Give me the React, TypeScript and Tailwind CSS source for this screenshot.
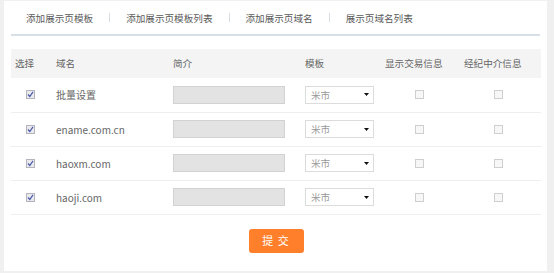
import {useState} from 'react'

const navItems = ['添加展示页模板', '添加展示页模板列表', '添加展示页域名', '展示页域名列表']

const rows = [
    {name: '批量设置'},
    {name: 'ename.com.cn'},
    {name: 'haoxm.com'},
    {name: 'haoji.com'},
]

function CheckedBox() {
    return (
        <span className="inline-flex w-[9px] h-[9px] items-center justify-center border border-[#b4b4bc] bg-[#e9e9ee]">
            <svg width="7" height="7" viewBox="0 0 7 7">
                <path d="M1 3.5 L2.8 5.5 L6 0.8" fill="none" stroke="#4a5aa8" strokeWidth="1.2" />
            </svg>
        </span>
    )
}

function EmptyBox() {
    return <span className="inline-block w-[9px] h-[9px] border border-[#cfcfcf] bg-[#f7f7f7]" />
}

function App() {
    const [sel] = useState('米市')

    return (
        <div className="w-[554px] h-[273px] bg-[#f0f0f0] pt-[1px] pl-[4px] font-['Noto_Sans_CJK_SC','Noto_Sans',sans-serif]">
            <div className="w-[543px] h-[270px] bg-white px-[7px]">
                <div className="flex items-center h-[35px] border-b-2 border-[#d9dfe7] pl-[15px] text-[9.6px] text-[#5a5a5a]">
                    {navItems.map((item, i) => (
                        <div key={item} className="flex items-center">
                            <span className="pt-[1px]">{item}</span>
                            {i < navItems.length - 1 && (
                                <span className="mx-[16px] w-px h-[9px] bg-[#d6dde6]" />
                            )}
                        </div>
                    ))}
                </div>

                <table className="mt-[13px] w-[530px] table-fixed border-collapse text-[9.6px] text-[#666]">
                    <colgroup>
                        <col className="w-[45px]" />
                        <col className="w-[117px]" />
                        <col className="w-[132px]" />
                        <col className="w-[80px]" />
                        <col className="w-[79px]" />
                        <col className="w-[77px]" />
                    </colgroup>
                    <thead>
                        <tr className="h-[29px] bg-[#f4f4f4] text-left">
                            <th className="font-normal pl-[4px]">选择</th>
                            <th className="font-normal">域名</th>
                            <th className="font-normal">简介</th>
                            <th className="font-normal">模板</th>
                            <th className="font-normal">显示交易信息</th>
                            <th className="font-normal">经纪中介信息</th>
                        </tr>
                    </thead>
                    <tbody>
                        {rows.map(r => (
                            <tr key={r.name} className="h-[34px] border-b border-[#eeeeee]">
                                <td className="pl-[15px]"><span className="flex"><CheckedBox /></span></td>
                                <td className="text-[10px] text-[#666]">{r.name}</td>
                                <td>
                                    <div className="w-[112px] h-[18px] bg-[#e3e3e3] border border-[#d2d2d2]" />
                                </td>
                                <td>
                                    <div className="flex items-center justify-between w-[69px] h-[18px] border border-[#dcdcdc] bg-white pl-[5px] pr-[4px] text-[#999]">
                                        <span>{sel}</span>
                                        <svg width="5" height="3" viewBox="0 0 5 3">
                                            <path d="M0 0 L5 0 L2.5 3 Z" fill="#111" />
                                        </svg>
                                    </div>
                                </td>
                                <td className="pl-[30px]"><span className="flex"><EmptyBox /></span></td>
                                <td className="pl-[30px]"><span className="flex"><EmptyBox /></span></td>
                            </tr>
                        ))}
                    </tbody>
                </table>

                <div className="flex justify-center mt-[14px] w-[530px]">
                    <button className="w-[55px] h-[24px] rounded-[3px] bg-[#ff7f2a] text-white text-[11px] tracking-[1px]">
                        提 交
                    </button>
                </div>
            </div>
        </div>
    )
}

export default App
